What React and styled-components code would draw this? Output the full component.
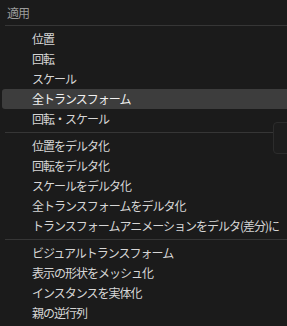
import React from "react";
import styled, { createGlobalStyle } from "styled-components";

const GlobalStyle = createGlobalStyle`
  html, body {
    margin: 0;
    padding: 0;
    background: #1b1b1b;
  }
  body {
    font-family: "Noto Sans CJK JP", "Noto Sans", sans-serif;
  }
`;

const Menu = styled.div`
  position: relative;
  width: 287px;
  height: 326px;
  overflow: hidden;
  background: #1b1b1b;
  display: flex;
  flex-direction: column;
`;

const Title = styled.div`
  height: 25px;
  line-height: 26px;
  flex-shrink: 0;
  padding-left: 7px;
  font-size: 12px;
  letter-spacing: -1px;
  color: #9c9c9c;
`;

const Separator = styled.div`
  height: 1px;
  flex-shrink: 0;
  margin: ${(p) => (p.$first ? "0 0 3px 5px" : "3px 0 3px 5px")};
  background: #363636;
`;

const Item = styled.div`
  height: 20px;
  line-height: 20px;
  flex-shrink: 0;
  margin-left: 2px;
  padding-left: 30px;
  font-size: 12px;
  letter-spacing: -1px;
  color: ${(p) => (p.$active ? "#f0f0f0" : "#d6d6d6")};
  background: ${(p) => (p.$active ? "#3d3d3d" : "transparent")};
  border-radius: 3px 0 0 3px;
  white-space: nowrap;
`;

const Ghost = styled.div`
  position: absolute;
  left: 273px;
  top: 122px;
  width: 30px;
  height: 30px;
  border: 1px solid #2c2c2c;
  border-radius: 4px;
  background: #1d1d1d;
`;

const groups = [
  ["位置", "回転", "スケール", "全トランスフォーム", "回転・スケール"],
  [
    "位置をデルタ化",
    "回転をデルタ化",
    "スケールをデルタ化",
    "全トランスフォームをデルタ化",
    "トランスフォームアニメーションをデルタ(差分)に",
  ],
  ["ビジュアルトランスフォーム", "表示の形状をメッシュ化", "インスタンスを実体化", "親の逆行列"],
];

export default function App() {
  return (
    <>
      <GlobalStyle />
      <Menu>
        <Ghost />
        <Title>適用</Title>
        {groups.map((items, gi) => (
          <React.Fragment key={gi}>
            <Separator $first={gi === 0} />
            {items.map((label) => (
              <Item key={label} $active={label === "全トランスフォーム"}>
                {label}
              </Item>
            ))}
          </React.Fragment>
        ))}
      </Menu>
    </>
  );
}
